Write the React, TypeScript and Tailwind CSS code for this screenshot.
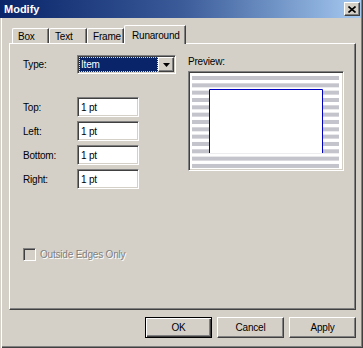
import React from 'react'

const sunken =
  'border border-t-[#808080] border-l-[#808080] border-r-white border-b-white shadow-[inset_1px_1px_#404040,inset_-1px_-1px_#d4d0c8]'
const raised =
  'border border-t-white border-l-white border-r-[#404040] border-b-[#404040] shadow-[inset_-1px_-1px_#808080]'

const Field = ({ label }: { label: string }) => (
  <div className="flex items-center h-[20px]">
    <span className="w-[54px]">{label}</span>
    <div className={`w-[62px] h-[20px] bg-white ${sunken} flex items-center pl-[3px]`}>1 pt</div>
  </div>
)

const Tab = ({ label, w, active }: { label: string; w: string; active?: boolean }) => (
  <div
    className={`${w} flex items-center border-l border-t border-l-white border-t-white border-r border-r-[#404040] shadow-[inset_-1px_0_#808080] rounded-tl-[2px] bg-[#d4d0c8] ${
      active ? 'h-[19px] -mb-px relative z-10 pl-[7px]' : 'h-[15px] pl-[5px]'
    }`}
  >
    {label}
  </div>
)

const Preview = () => {
  const stripes = Array.from({ length: 13 }, (_, i) => 3 + i * 7.33)
  return (
    <svg width="152" height="96" className="block">
      <rect x="0" y="0" width="152" height="96" fill="#ffffff" />
      {stripes.map((y) => (
        <rect key={y} x="2" y={y} width="147" height="4" fill="#c4c4cc" />
      ))}
      <rect x="19" y="16" width="114" height="64" fill="#ffffff" />
      <path d="M19.5 80V16.5H132.5V80" fill="none" stroke="#0000c0" strokeWidth="1" />
    </svg>
  )
}

export default function App() {
  return (
    <div className="w-[363px] h-[348px] bg-[#d4d0c8] text-[10px] tracking-[-0.2px] text-black font-['Liberation_Sans',Arial,sans-serif] shadow-[inset_1px_0_#d4d0c8,inset_2px_0_#fff,inset_-1px_-1px_#404040,inset_-2px_-2px_#808080] overflow-hidden leading-[13px]">
      {/* title bar */}
      <div className="h-[18px] w-[361px] bg-gradient-to-r from-[#0a246a] via-[#3a5a98] to-[#a6caf0] flex items-center justify-between pl-[4px] pr-[1px]">
        <span className="text-white font-bold text-[11px] tracking-normal">Modify</span>
        <div className={`w-[16px] h-[14px] bg-[#d4d0c8] ${raised} flex items-center justify-center`}>
          <svg width="8" height="7" viewBox="0 0 8 7">
            <path d="M0.5 0.5L7.5 6.5M7.5 0.5L0.5 6.5" stroke="#000" strokeWidth="1.6" />
          </svg>
        </div>
      </div>

      {/* tabs */}
      <div className="flex items-end h-[25px] pl-[12px]">
        <Tab label="Box" w="w-[37px]" />
        <Tab label="Text" w="w-[38px]" />
        <Tab label="Frame" w="w-[37px]" />
        <Tab label="Runaround" w="w-[62px]" active />
      </div>

      {/* panel */}
      <div className="ml-[9px] w-[347px] h-[267px] border border-t-white border-l-white border-r-[#404040] border-b-[#404040] shadow-[inset_-1px_-1px_#808080] pl-[13px]">
        <div className="flex">
          <div className="w-[153px] pt-[11px]">
            <div className="flex items-center h-[19px]">
              <span className="w-[54px]">Type:</span>
              <div className={`w-[99px] h-[19px] bg-white ${sunken} flex items-center p-px`}>
                <div className="flex-1 h-[15px] bg-[#0a246a] border border-dotted border-[#e8e0a0] text-white flex items-center pl-px">
                  Item
                </div>
                <div className={`w-[16px] h-[15px] bg-[#d4d0c8] ${raised} flex items-center justify-center`}>
                  <svg width="7" height="4" viewBox="0 0 7 4">
                    <path d="M0 0H7L3.5 4Z" fill="#000" />
                  </svg>
                </div>
              </div>
            </div>
            <div className="mt-[23px] flex flex-col gap-[4px]">
              <Field label="Top:" />
              <Field label="Left:" />
              <Field label="Bottom:" />
              <Field label="Right:" />
            </div>
          </div>
          <div className="ml-[12px] pt-[11px]">
            <div className="h-[13px]">Preview:</div>
            <div className={`mt-[3px] w-[156px] h-[100px] bg-white ${sunken} p-px`}>
              <Preview />
            </div>
          </div>
        </div>

        <div className="mt-[59px] flex items-center gap-[4px] text-[#808080] [text-shadow:1px_1px_#fff]">
          <div className={`w-[13px] h-[13px] bg-[#d4d0c8] ${sunken}`} />
          <span>Outside Edges Only</span>
        </div>
      </div>

      {/* buttons */}
      <div className="mt-[7px] flex justify-end gap-[5px] pr-[7px]">
        <div className="w-[67px] h-[21px] border border-black shadow-[inset_1px_1px_#fff,inset_-1px_-1px_#404040,inset_-2px_-2px_#808080] flex items-center justify-center">
          OK
        </div>
        <div className={`w-[67px] h-[21px] ${raised} flex items-center justify-center`}>Cancel</div>
        <div className={`w-[67px] h-[21px] ${raised} flex items-center justify-center`}>Apply</div>
      </div>
    </div>
  )
}
